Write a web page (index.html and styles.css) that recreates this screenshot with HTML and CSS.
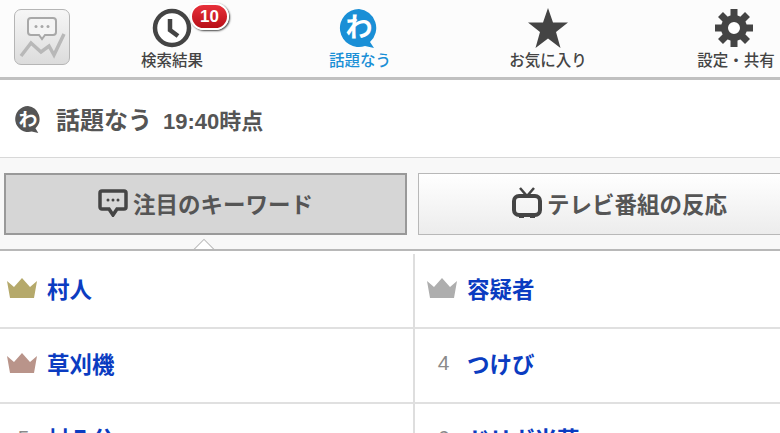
FILE: index.html
```html
<!DOCTYPE html>
<html lang="ja">

<head>
    <meta charset="utf-8">
    <meta name="viewport" content="width=device-width, initial-scale=1.0">
    <title>話題なう</title>
    <link rel="stylesheet" href="styles.css">
</head>

<body>
    <header class="topbar">
        <div class="logo">
            <svg viewBox="0 0 56 56" width="56" height="56">
                <path d="M17 9h22a3 3 0 0 1 3 3v11a3 3 0 0 1-3 3h-8l-3 4-3-4h-8a3 3 0 0 1-3-3V12a3 3 0 0 1 3-3z" fill="#f4f4f4" stroke="#a8a8a8" stroke-width="2"/>
                <circle cx="22" cy="17.500" r="1.500" fill="#a8a8a8"/>
                <circle cx="28" cy="17.500" r="1.500" fill="#a8a8a8"/>
                <circle cx="34" cy="17.500" r="1.500" fill="#a8a8a8"/>
                <path d="M7 47l10-13 10 9 8-6 5 9 10-21" fill="none" stroke="#b8b8b8" stroke-width="3.500"/>
            </svg>
        </div>
        <nav class="tabs">
            <a class="tab tab-search">
                <svg viewBox="0 0 40 40" width="40" height="40">
                    <circle cx="20" cy="20" r="17" fill="#fff" stroke="#444" stroke-width="4.500"/>
                    <path d="M18 11v11l8 6" fill="none" stroke="#444" stroke-width="4.500"/>
                </svg>
                <span>検索結果</span>
                <b class="badge">10</b>
            </a>
            <a class="tab tab-now">
                <svg viewBox="0 0 40 40" width="40" height="40">
                    <path d="M20 1a19 19 0 1 0 6 37l9 2-4-6A19 19 0 0 0 20 1z" fill="#1a8fd6"/>
                    <text x="20" y="29" class="wa">わ</text>
                </svg>
                <span>話題なう</span>
            </a>
            <a class="tab tab-fav">
                <svg viewBox="0 0 40 40" width="40" height="40">
                    <path d="M20 0l5 14.500h15l-12 9.500 4.500 16-12.500-9.500-12.500 9.500 4.500-16-12-9.500h15z" fill="#444"/>
                </svg>
                <span>お気に入り</span>
            </a>
            <a class="tab tab-setting">
                <svg viewBox="0 0 40 40" width="40" height="40">
                    <g stroke="#444" stroke-width="7">
                        <path d="M20 1v38M1 20h38M6.500 6.500l27 27M33.500 6.500l-27 27"/>
                    </g>
                    <circle cx="20" cy="20" r="9.500" fill="#fff" stroke="#444" stroke-width="7"/>
                </svg>
                <span>設定・共有</span>
            </a>
        </nav>
    </header>

    <section class="heading">
        <svg viewBox="0 0 30 30" width="28" height="28">
            <path d="M15 1a14 14 0 1 0 4 27.500l7 1.500-3-5A14 14 0 0 0 15 1z" fill="#555"/>
            <text x="15" y="22" class="wa wa-small">わ</text>
        </svg>
        <h1>話題なう</h1>
        <p>19:40時点</p>
    </section>

    <section class="switcher">
        <button class="switch selected">
            <svg viewBox="0 0 30 28" width="30" height="28">
                <path d="M4 2h22a2 2 0 0 1 2 2v14a2 2 0 0 1-2 2h-7l-4 6-4-6H4a2 2 0 0 1-2-2V4a2 2 0 0 1 2-2z" fill="none" stroke="#444" stroke-width="3.500"/>
                <circle cx="10" cy="11" r="1.500" fill="#444"/>
                <circle cx="15" cy="11" r="1.500" fill="#444"/>
                <circle cx="20" cy="11" r="1.500" fill="#444"/>
            </svg>
            注目のキーワード
        </button>
        <button class="switch">
            <svg viewBox="0 0 30 32" width="30" height="32">
                <path d="M8 1l7 8 7-8" fill="none" stroke="#444" stroke-width="2.500"/>
                <rect x="2" y="9" width="26" height="19" rx="5" fill="none" stroke="#444" stroke-width="4"/>
                <path d="M7 29h5v2H7zM18 29h5v2h-5z" fill="#444"/>
            </svg>
            テレビ番組の反応
        </button>
        <span class="caret"></span>
    </section>

    <section class="ranking">
        <div class="cell">
            <svg class="crown" viewBox="0 0 32 20" fill="#b5a96b"><path d="M1 3l7 6 8-9 8 9 7-6-3 17H4z"/></svg>
            <a>村人</a>
        </div>
        <div class="cell">
            <svg class="crown" viewBox="0 0 32 20" fill="#aeaeae"><path d="M1 3l7 6 8-9 8 9 7-6-3 17H4z"/></svg>
            <a>容疑者</a>
        </div>
        <div class="cell">
            <svg class="crown" viewBox="0 0 32 20" fill="#b9948a"><path d="M1 3l7 6 8-9 8 9 7-6-3 17H4z"/></svg>
            <a>草刈機</a>
        </div>
        <div class="cell">
            <span class="rank">4</span>
            <a>つけび</a>
        </div>
        <div class="cell">
            <span class="rank">5</span>
            <a>村八分</a>
        </div>
        <div class="cell">
            <span class="rank">6</span>
            <a>ドリガ米菜</a>
        </div>
    </section>
</body>

</html>
```

FILE: styles.css
```css
* {
    margin: 0;
    padding: 0;
    box-sizing: border-box;
}

html,
body {
    height: 433px;
    overflow: hidden;
}

body {
    width: 780px;
    background-color: #ffffff;
    color: #555555;
    font-family: "Liberation Sans", "Noto Sans CJK JP", sans-serif;
}

.topbar {
    display: flex;
    height: 80px;
    background-color: #fcfcfc;
    border-bottom: 3px solid #c0c0c0;
}

.logo {
    width: 56px;
    height: 56px;
    flex: none;
    margin: 9px 0 0 14px;
    background: linear-gradient(#f6f6f6, #dcdcdc);
    border: 1px solid #b5b5b5;
    border-radius: 7px;
}

.logo svg {
    display: block;
    margin: -1px;
}

.tabs {
    display: flex;
    flex: 1;
}

.tab {
    position: relative;
    display: flex;
    flex-direction: column;
    align-items: center;
    padding-top: 8px;
    color: #444444;
    font-size: 15.500px;
    font-weight: 500;
    line-height: 20px;
    white-space: nowrap;
}

.tab svg {
    margin-bottom: 3px;
}

.tab-search {
    margin-left: 71px;
    width: 62px;
}

.tab-now {
    margin-left: 126px;
    width: 62px;
    color: #1a8fd6;
}

.tab-now svg {
    margin-right: 2px;
}

.tab-fav {
    margin-left: 118px;
    width: 78px;
}

.tab-setting {
    margin-left: 110px;
    width: 78px;
}

.tab-setting svg {
    margin-right: 4px;
}

.wa {
    fill: #ffffff;
    font-size: 27px;
    font-weight: bold;
    text-anchor: middle;
}

.wa-small {
    font-size: 20px;
}

.badge {
    position: absolute;
    top: 3px;
    left: 49px;
    width: 39px;
    height: 27px;
    background: linear-gradient(#e8303a, #b80f18);
    border: 2px solid #ffffff;
    border-radius: 14px;
    box-shadow: 1px 1px 2px #444444;
    color: #ffffff;
    font-size: 17px;
    line-height: 23px;
    text-align: center;
}

.heading {
    display: flex;
    align-items: center;
    height: 78px;
    padding-left: 14px;
    border-bottom: 1px solid #d8d8d8;
    font-weight: bold;
}

.heading h1 {
    margin-left: 14px;
    font-size: 24px;
}

.heading p {
    margin-left: 11px;
    font-size: 22px;
}

.switcher {
    position: relative;
    display: flex;
    gap: 11px;
    height: 93px;
    padding: 15px 0 0 4px;
    background-color: #f8f8f8;
    border-bottom: 2px solid #b8b8b8;
    overflow: hidden;
}

.switch {
    display: flex;
    flex: none;
    align-items: center;
    justify-content: center;
    gap: 5px;
    width: 403px;
    height: 62px;
    padding-bottom: 2px;
    background: linear-gradient(#ffffff, #ececec);
    border: 1px solid #b8b8b8;
    color: #555555;
    font-family: inherit;
    font-size: 22.500px;
    font-weight: bold;
}

.switch.selected {
    background: #d6d6d6;
    border: 2px solid #999999;
}

/* lille pil under valgt knap */
.caret {
    position: absolute;
    left: 196px;
    bottom: -9px;
    width: 16px;
    height: 16px;
    background-color: #ffffff;
    border: 1px solid #b8b8b8;
    transform: rotate(45deg);
}

.ranking {
    display: grid;
    grid-template-columns: 413px 1fr;
    grid-auto-rows: 75px;
    padding-top: 3px;
}

.cell {
    display: flex;
    align-items: center;
    height: 75px;
    padding: 0 0 6px 6px;
    border-bottom: 2px solid #e0e0e0;
}

.cell:nth-child(even) {
    padding-left: 11px;
    border-left: 2px solid #dedede;
}

.crown {
    width: 32px;
    height: 20px;
    flex: none;
}

.rank {
    width: 32px;
    flex: none;
    padding-left: 3px;
    color: #8a8a8a;
    font-size: 21px;
    text-align: center;
}

.cell a {
    margin-left: 9px;
    color: #0b3cc1;
    font-size: 22.500px;
    font-weight: bold;
}
```
